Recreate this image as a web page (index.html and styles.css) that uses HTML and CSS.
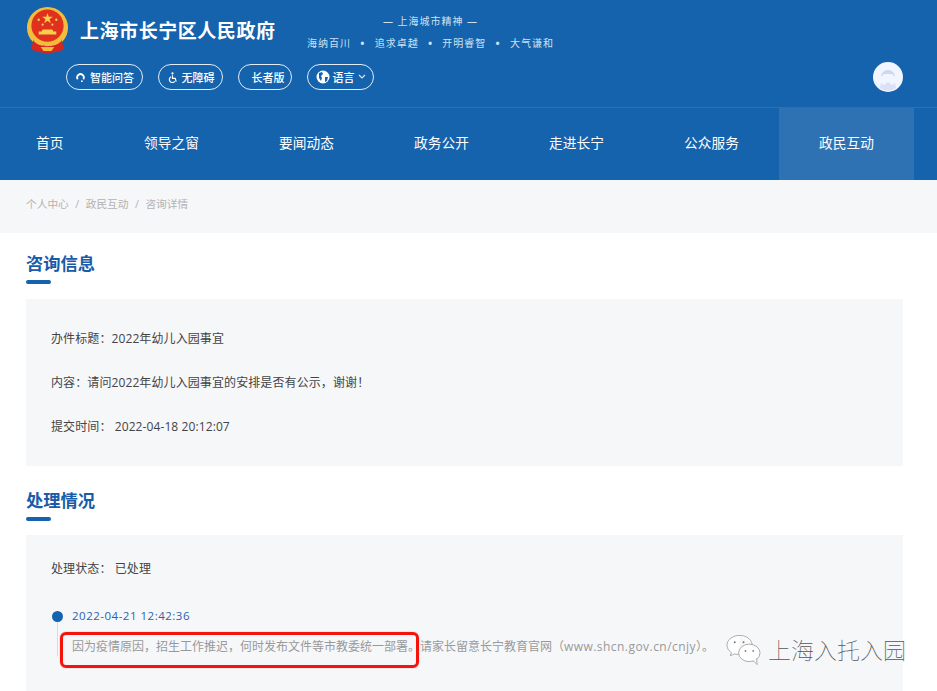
FILE: index.html
```html
<!DOCTYPE html>
<html lang="zh-CN">
<head>
    <meta charset="UTF-8">
    <meta name="viewport" content="width=device-width, initial-scale=1.0">
    <title>咨询详情</title>
    <link rel="stylesheet" href="styles.css">
</head>
<body>
    <header class="header">
        <div class="brand-row">
            <svg class="emblem" viewBox="0 0 44 48">
                <circle cx="22" cy="21" r="21" fill="#f2bd3c"/>
                <circle cx="22" cy="19" r="16.500" fill="#e0301e"/>
                <polygon points="22,6 23.300,10 27.500,10 24.100,12.500 25.400,16.500 22,14 18.600,16.500 19.900,12.500 16.500,10 20.700,10" fill="#f6d04d"/>
                <circle cx="13" cy="13" r="1.200" fill="#f6d04d"/>
                <circle cx="31" cy="13" r="1.200" fill="#f6d04d"/>
                <circle cx="17" cy="18" r="1.100" fill="#f6d04d"/>
                <circle cx="27" cy="18" r="1.100" fill="#f6d04d"/>
                <path d="M17 23h10l1 2h3v3H13v-3h3z" fill="#f6d04d"/>
                <path d="M8 33c4 4 9 5 14 5s10-1 14-5l3 10c-5 3-10 4-17 4s-12-1-17-4z" fill="#d8251d"/>
                <path d="M7 30c3 5 9 7 15 7s12-2 15-7l-1 5c-4 4-9 5-14 5s-10-1-14-5z" fill="#f2bd3c"/>
                <path d="M15 41l3 4h8l3-4z" fill="#f2bd3c"/>
            </svg>
            <div class="site-name">上海市长宁区人民政府</div>
            <div class="motto">
                <div class="motto-title">— 上海城市精神 —</div>
                <div class="motto-words">
                    <span>海纳百川</span><b>•</b><span>追求卓越</span><b>•</b><span>开明睿智</span><b>•</b><span>大气谦和</span>
                </div>
            </div>
        </div>
        <div class="tool-row">
            <a class="pill pill-ask">
                <svg class="pill-icon" viewBox="0 0 12 12"><path d="M3 8A3.600 3.600 0 1 1 9 8" fill="none" stroke="#fff" stroke-width="2"/><circle cx="7.500" cy="10" r="1" fill="#fff"/></svg>
                智能问答
            </a>
            <a class="pill pill-access">
                <svg class="pill-icon" viewBox="0 0 12 12"><circle cx="6" cy="1.500" r="1.200" fill="#fff"/><path d="M6 3.500V7h3l1 3.500M4.500 5.200a3.300 3.300 0 1 0 4 5" fill="none" stroke="#fff" stroke-width="1.300"/></svg>
                无障碍
            </a>
            <a class="pill pill-elder">长者版</a>
            <a class="pill pill-lang">
                <svg class="globe" viewBox="0 0 14 14"><circle cx="7" cy="7" r="6.500" fill="#fff"/><path d="M3 3l3-1 1 2-2 2 1 2-1 3-2-3zM9 7l3 0-1 4-2 1z" fill="#1562ad"/></svg>
                语言
                <svg class="chevron" viewBox="0 0 8 6"><path d="M1 1l3 3 3-3" fill="none" stroke="#d6e4f3" stroke-width="1.200"/></svg>
            </a>
            <div class="avatar">
                <svg viewBox="0 0 30 30"><circle cx="15" cy="15" r="15" fill="#f1f5ff"/><path d="M8 15a7 7 0 0 1 14 0l-3-3h-8z" fill="#cdd6f2"/><path d="M7 26l1-5 3 2 4-3 4 3 3-2 1 5a15 15 0 0 1-16 0z" fill="#dbe0f6"/></svg>
            </div>
        </div>
    </header>

    <nav class="nav">
        <a class="nav-item nav-first">首页</a>
        <a class="nav-item">领导之窗</a>
        <a class="nav-item">要闻动态</a>
        <a class="nav-item">政务公开</a>
        <a class="nav-item">走进长宁</a>
        <a class="nav-item">公众服务</a>
        <a class="nav-item active">政民互动</a>
    </nav>

    <div class="crumbs">
        <span>个人中心</span><i>/</i><span>政民互动</span><i>/</i><span>咨询详情</span>
    </div>

    <main class="content">
        <h2 class="section-title">咨询信息</h2>
        <section class="panel">
            <p>办件标题：2022年幼儿入园事宜</p>
            <p>内容：请问2022年幼儿入园事宜的安排是否有公示，谢谢！</p>
            <p>提交时间： 2022-04-18 20:12:07</p>
        </section>

        <h2 class="section-title section-second">处理情况</h2>
        <section class="panel panel-last">
            <p>处理状态： 已处理</p>
            <div class="timeline">
                <div class="time">2022-04-21 12:42:36</div>
                <div class="reply">因为疫情原因，招生工作推迟，何时发布文件等市教委统一部署。请家长留意长宁教育官网（<span class="url">www.shcn.gov.cn/cnjy</span>）。</div>
            </div>
        </section>
    </main>

    <!-- 截图上的标注和水印 -->
    <div class="red-mark"></div>
    <div class="watermark">
        <svg class="wechat" viewBox="0 0 36 32">
            <path d="M14 1C7 1 1 5.500 1 11c0 3 1.800 5.800 4.500 7.600L4.500 22l4-2c1.500.4 3 .6 4.500.6" fill="#fff" stroke="#888" stroke-width=".7"/>
            <path d="M14 1c6.500 0 12 3.800 12.800 9" fill="#fff" stroke="#888" stroke-width=".7"/>
            <ellipse cx="24" cy="19" rx="11" ry="9" fill="#fff" stroke="#888" stroke-width=".7"/>
            <path d="M28 27l4 4-.5-6" fill="#fff" stroke="#888" stroke-width=".7"/>
            <circle cx="9" cy="8" r="1" fill="#777"/><circle cx="18" cy="8" r="1" fill="#777"/>
            <circle cx="20" cy="17" r=".9" fill="#777"/><circle cx="28" cy="17" r=".9" fill="#777"/>
        </svg>
        <span>上海入托入园</span>
    </div>
</body>
</html>
```

FILE: styles.css
```css
* {
    box-sizing: border-box;
}
html, body {
    margin: 0;
    height: 691px;
    overflow: hidden;
}
body {
    position: relative;
    background-color: #fff;
    font-family: "Open Sans", "Noto Sans CJK SC", sans-serif;
    font-size: 12px;
    color: #333;
}
.header {
    height: 108px;
    background-color: #1562ad;
    border-bottom: 1px solid #2a71b5;
    padding: 7px 34px 0 26px;
    color: #fff;
}
.brand-row {
    display: flex;
    height: 48px;
}
.emblem {
    width: 43px;
    height: 47px;
    flex: none;
}
.site-name {
    margin: 10px 0 0 11px;
    width: 227px;
    font-size: 19px;
    line-height: 28px;
    font-weight: 700;
    letter-spacing: 0.55px;
}
.motto {
    width: 247px;
    margin-top: 7px;
    font-size: 10px;
    line-height: 14px;
    color: #cfe0f1;
    text-align: center;
}
.motto-title {
    margin-bottom: 8px;
    letter-spacing: 1px;
}
.motto-words {
    display: flex;
    justify-content: space-between;
    letter-spacing: 1px;
}
.motto-words b {
    font-weight: 700;
    font-size: 11px;
}
.tool-row {
    display: flex;
    align-items: center;
    height: 30px;
    margin-top: 7px;
    padding-left: 40px;
    gap: 15px;
}
.pill {
    display: flex;
    align-items: center;
    justify-content: center;
    height: 26px;
    border: 1px solid #e3edf7;
    border-radius: 13px;
    font-size: 11px;
    font-weight: 500;
    color: #fff;
}
.pill-ask {
    width: 77px;
    gap: 4px;
}
.pill-access {
    width: 65px;
    gap: 4px;
}
.pill-elder {
    width: 54px;
    padding-left: 6px;
}
.pill-lang {
    width: 67px;
    gap: 3px;
}
.pill-icon {
    width: 11px;
    height: 11px;
}
.globe {
    width: 14px;
    height: 14px;
}
.chevron {
    width: 8px;
    height: 6px;
}
.avatar {
    width: 30px;
    height: 30px;
    margin-left: auto;
}
.nav {
    display: flex;
    height: 72px;
    background-color: #1562ad;
}
.nav-item {
    width: 135px;
    line-height: 69px;
    text-align: center;
    font-size: 13.700px;
    color: #fff;
}
.nav-first {
    width: 104px;
    padding-left: 36px;
    text-align: left;
}
.nav-item.active {
    background-color: #2f72b3;
}
.crumbs {
    display: flex;
    align-items: center;
    height: 53px;
    padding: 0 0 6px 26px;
    background-color: #f6f7f9;
    font-size: 10.700px;
    color: #b2b2b2;
}
.crumbs i {
    margin: 0 6.500px;
    font-style: normal;
}
.content {
    padding: 0 34px 0 26px;
}
.section-title {
    position: relative;
    margin: 0;
    padding-top: 19px;
    height: 66px;
    font-size: 17.300px;
    line-height: 24px;
    font-weight: 700;
    color: #1a5ba8;
}
.section-title::after {
    content: "";
    position: absolute;
    left: 0;
    top: 47px;
    width: 25px;
    height: 4px;
    border-radius: 2px;
    background-color: #1562ad;
}
.section-second {
    height: 69px;
    padding-top: 23px;
}
.section-second::after {
    top: 51px;
}
.panel {
    height: 167px;
    padding: 18px 25px 0;
    background-color: #f6f7f9;
}
.panel p {
    margin: 0;
    height: 44px;
    line-height: 44px;
    letter-spacing: 0.1px;
    color: #444;
}
.panel-last {
    height: 156px;
    padding-top: 12px;
}
.timeline {
    position: relative;
    margin-top: 17px;
    padding-left: 21px;
}
.timeline::before {
    content: "";
    position: absolute;
    left: 1px;
    top: 3px;
    width: 11px;
    height: 11px;
    border-radius: 50%;
    background-color: #1562ad;
}
.timeline::after {
    content: "";
    position: absolute;
    left: 6px;
    top: 14px;
    width: 1px;
    height: 34px;
    background-color: #cfdcea;
}
.time {
    line-height: 16px;
    font-size: 11.500px;
    letter-spacing: 0.5px;
    color: #2c62ab;
}
.reply {
    margin-top: 15px;
    line-height: 16px;
    font-size: 12px;
    color: #999;
    white-space: nowrap;
}
.url {
    letter-spacing: 0.45px;
}
.red-mark {
    position: absolute;
    left: 60px;
    top: 632px;
    width: 359px;
    height: 36px;
    border: 3px solid #f5140c;
    border-radius: 6px;
    box-shadow: 0 0 1px rgba(245, 20, 12, 0.7);
}
.watermark {
    position: absolute;
    left: 726px;
    top: 633px;
    display: flex;
    align-items: center;
    gap: 7px;
    font-size: 23px;
    line-height: 34px;
    font-weight: 100;
    color: #555;
}
.wechat {
    width: 35px;
    height: 32px;
}
```
